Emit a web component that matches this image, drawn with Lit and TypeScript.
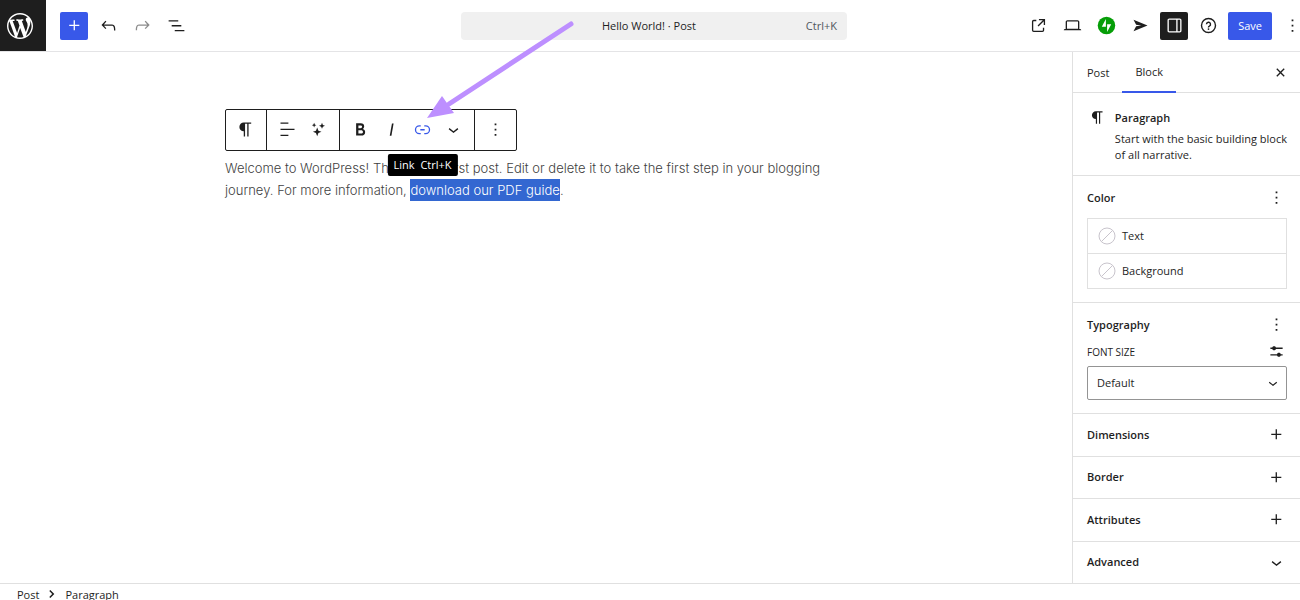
import { LitElement, html, css, svg } from "lit";
import { customElement, property } from "lit/decorators.js";

const ICONS: Record<string, string> = {
  plus: "M11 12.5V17.5H12.5V12.5H17.5V11H12.5V6H11V11H6V12.5H11Z",
  undo: "M18.3 11.7c-.6-.6-1.4-.9-2.3-.9H6.7l2.9-3.3-1.1-1-4.5 5L8.5 16l1-1-2.7-2.7H16c.5 0 .9.2 1.3.5 1 1 1 3.4 1 4.5v.3h1.5v-.2c0-1.5 0-4.3-1.5-5.7z",
  redo: "M15.6 6.5l-1.1 1 2.9 3.3H8c-.9 0-1.7.3-2.3.9-1.4 1.5-1.4 4.2-1.4 5.6v.2h1.5v-.3c0-1.1 0-3.5 1-4.5.3-.3.7-.5 1.3-.5h9.2L14.5 15l1.1 1.1 4.6-4.6-4.6-5z",
  list: "M3 6h11v1.5H3V6Zm3.5 5.5h11V13h-11v-1.5ZM21 17H10v1.5h11V17Z",
  external: "M19.5 4.5h-7V6h4.44l-5.97 5.97 1.06 1.06L18 7.06v4.44h1.5v-7Zm-13 1a2 2 0 0 0-2 2v10a2 2 0 0 0 2 2h10a2 2 0 0 0 2-2v-3H17v3a.5.5 0 0 1-.5.5h-10a.5.5 0 0 1-.5-.5v-10a.5.5 0 0 1 .5-.5h3V5.5h-3Z",
  desktop: "M20.5 16h-.7V8c0-1.1-.9-2-2-2H6.2c-1.1 0-2 .9-2 2v8h-.7c-.8 0-1.5.7-1.5 1.5h20c0-.8-.7-1.5-1.5-1.5zM5.7 8c0-.3.2-.5.5-.5h11.6c.3 0 .5.2.5.5v7.6H5.7V8z",
  send: "M4 5.5L20 12 4 18.5l3-5.6 6-.9-6-.9z",
  drawer: "M18 4H6c-1.1 0-2 .9-2 2v12c0 1.1.9 2 2 2h12c1.1 0 2-.9 2-2V6c0-1.1-.9-2-2-2zm-4 14.5H6c-.3 0-.5-.2-.5-.5V6c0-.3.2-.5.5-.5h8v13zm4.5-.5c0 .3-.2.5-.5.5h-2.5v-13H18c.3 0 .5.2.5.5v12z",
  more: "M13 19h-2v-2h2v2zm0-6h-2v-2h2v2zm0-6h-2V5h2v2z",
  close: "M12 13.06l3.712 3.713 1.061-1.06L13.061 12l3.712-3.712-1.06-1.06L12 10.938 8.288 7.227l-1.061 1.06L10.939 12l-3.712 3.712 1.06 1.061L12 13.061z",
  paragraph: "m9.99609 14v-.2251l.00391.0001v6.225h1.5v-14.5h2.5v14.5h1.5v-14.5h3v-1.5h-8.50391c-2.76142 0-5 2.23858-5 5 0 2.7614 2.23858 5 5 5z",
  align: "M13 5.5H4V4h9v1.5Zm7 7H4V11h16v1.5Zm-7 7H4V18h9v1.5Z",
  sparkles: "M10.5 9.8l1.4 3.5 3.5 1.4-3.5 1.4-1.4 3.5-1.4-3.5-3.5-1.4 3.5-1.4zM16 4.4l1 2.4 2.4 1-2.4 1-1 2.4-1-2.4-2.4-1 2.4-1zM7 4.4l.8 1.8 1.8.8-1.8.8L7 9.6l-.8-1.8L4.4 7l1.8-.8z",
  bold: "M14.7 11.3c1-.6 1.5-1.6 1.5-3 0-2.3-1.3-3.4-4-3.4H7v14h5.8c1.4 0 2.5-.3 3.3-1 .8-.7 1.2-1.7 1.2-2.9.1-1.9-.8-3.1-2.6-3.7zm-5.1-4h2.3c.6 0 1.1.1 1.4.4.3.3.5.7.5 1.2s-.2 1-.5 1.2c-.3.3-.8.4-1.4.4H9.6V7.3zm4.6 9c-.4.3-1 .4-1.7.4H9.6v-3.9h2.9c.7 0 1.3.2 1.7.5.4.3.6.8.6 1.5s-.2 1.2-.6 1.5z",
  italic: "M12.5 5L10 19h1.9l2.5-14z",
  link: "M10 17.389H8.444A5.194 5.194 0 1 1 8.444 7H10v1.5H8.444a3.694 3.694 0 0 0 0 7.389H10v1.5ZM14 7h1.556a5.194 5.194 0 0 1 0 10.39H14v-1.5h1.556a3.694 3.694 0 0 0 0-7.39H14V7Zm-4.5 6h5v-1.5h-5V13Z",
  chevron: "M17.5 11.6L12 16l-5.5-4.4.9-1.2L12 14l4.5-3.6 1 1.2z",
  settings: "M19 7.5h-7.628c-.309-.874-1.142-1.5-2.122-1.5s-1.813.626-2.122 1.5H5V9h2.128c.309.874 1.142 1.5 2.122 1.5s1.813-.626 2.122-1.5H19zM19 15h-2.128c-.309-.874-1.142-1.5-2.122-1.5s-1.813.626-2.122 1.5H5v1.5h7.628c.309.874 1.142 1.5 2.122 1.5s1.813-.626 2.122-1.5H19z",
  crumb: "M9.5 6l6 6-6 6-1.600-1.600 4.400-4.400-4.400-4.400z",
  wordpress: "M20 10c0-5.51-4.49-10-10-10C4.48 0 0 4.49 0 10c0 5.52 4.48 10 10 10 5.51 0 10-4.48 10-10zM7.78 15.37L4.37 6.22c.55-.02 1.17-.08 1.17-.08.5-.06.44-1.13-.06-1.11 0 0-1.45.11-2.37.11-.18 0-.37 0-.58-.01C4.12 2.69 6.87 1.11 10 1.11c2.33 0 4.45.87 6.05 2.34-.68-.11-1.65.39-1.65 1.58 0 .74.45 1.36.9 2.1.35.61.55 1.36.55 2.46 0 1.49-1.4 5-1.4 5l-3.03-8.37c.54-.02.82-.17.82-.17.5-.05.44-1.25-.06-1.22 0 0-1.44.12-2.38.12-.87 0-2.33-.12-2.33-.12-.5-.03-.56 1.2-.06 1.22l.92.08 1.26 3.41zM17.41 10c.24-.64.74-1.87.43-4.25.7 1.29 1.05 2.71 1.05 4.25 0 3.29-1.73 6.24-4.4 7.78.97-2.59 1.94-5.2 2.92-7.78zM6.1 18.09C3.12 16.65 1.11 13.53 1.11 10c0-1.3.23-2.48.72-3.59C3.25 10.3 4.67 14.2 6.1 18.09zm4.03-6.63l2.58 6.98c-.86.29-1.76.45-2.71.45-.79 0-1.57-.11-2.29-.33.81-2.38 1.62-4.74 2.42-7.1z",
};

@customElement("ui-icon")
class UiIcon extends LitElement {
  @property() name = "plus";

  static styles = css`
    :host { display: block; width: 21px; height: 21px; }
    .icon { display: block; width: 100%; height: 100%; fill: currentColor; }
  `;

  render() {
    if (this.name === "help") {
      return html`<svg class="icon" viewBox="0 0 24 24" aria-hidden="true">${svg`
        <circle cx="12" cy="12" r="8" fill="none" stroke="currentColor" stroke-width="1.6"/>
        <path d="M9.7 10.6a2.3 2.3 0 1 1 3.3 2c-.7.3-1 .7-1 1.4v.3" fill="none" stroke="currentColor" stroke-width="1.6"/>
        <circle cx="12" cy="16" r="1"/>`}</svg>`;
    }
    if (this.name === "jetpack") {
      return html`<svg class="icon" viewBox="0 0 24 24" aria-hidden="true">
        <circle cx="12" cy="12" r="10" fill="#069e08"/>
        <path d="M11.3 4.5v9H6.6zM12.7 19.5v-9h4.7z" fill="#fff"/></svg>`;
    }
    const box = this.name === "wordpress" ? "0 0 20 20" : "0 0 24 24";
    return html`<svg class="icon" viewBox=${box} aria-hidden="true"><path fill-rule="evenodd" d=${ICONS[this.name]}></path></svg>`;
  }
}

@customElement("app-root")
class AppRoot extends LitElement {
  static styles = css`
    :host {
      display: flex;
      flex-direction: column;
      height: 100vh;
      overflow: hidden;
      background: #fff;
      color: #1e1e1e;
      font: 11px/16px "Open Sans", "Noto Sans", sans-serif;
    }
    * { box-sizing: border-box; }
    button, select {
      margin: 0;
      padding: 0;
      border: 0;
      background: none;
      color: inherit;
      font: inherit;
    }
    button { display: flex; align-items: center; justify-content: center; }
    h2, p { margin: 0; font-size: inherit; font-weight: 600; }

    .header {
      flex: none;
      display: grid;
      grid-template-columns: 1fr minmax(0, 386px) 1fr;
      column-gap: 4px;
      align-items: center;
      height: 52px;
      border-bottom: 1px solid #e4e4e6;
    }
    .tools { display: flex; align-items: center; gap: 6px; }
    .tools.end { justify-content: flex-end; }
    .home {
      display: flex;
      align-items: center;
      justify-content: center;
      width: 46px;
      height: 51px;
      margin-right: 8px;
      padding-right: 6px;
      background: #1e1e1e;
      color: #fff;
    }
    .home ui-icon { width: 26px; height: 26px; }
    .square { width: 28px; height: 28px; border-radius: 2px; }
    .primary { background: #3858e9; color: #fff; }
    .dark { background: #1e1e1e; color: #fff; }
    .faded { color: #8c8c8c; }
    .save { height: 28px; padding: 0 10px; border-radius: 2px; }
    .last { margin-right: -6px; }
    .command {
      display: grid;
      grid-template-columns: 1fr auto 1fr;
      height: 28px;
      margin-left: 4px;
      margin-right: -4px;
      padding: 0 10px 0 0;
      border-radius: 4px;
      background: #f0f0f0;
    }
    .command .keys { justify-self: end; grid-column: 3; color: #50575e; }
    .command .title { grid-column: 2; }

    .body { flex: 1; min-height: 0; display: flex; }
    .canvas { flex: 1; min-width: 0; padding: 57px 24px 0; }
    .column { max-width: 622px; margin: 0 auto; }
    .toolbar {
      display: flex;
      width: max-content;
      height: 42px;
      margin-bottom: 6px;
      border: 1px solid #1e1e1e;
      border-radius: 2px;
    }
    .group { display: flex; padding: 0 5px 1px; }
    .group:first-child { padding-left: 4px; }
    .group + .group { border-left: 1px solid #1e1e1e; }
    .group button { width: 31px; }
    .anchor { position: relative; display: flex; }
    .active { color: #3858e9; }
    .tip {
      position: absolute;
      top: 44px;
      left: 50%;
      z-index: 1;
      display: flex;
      gap: 6px;
      padding: 3px 6px;
      border-radius: 2px;
      background: #000;
      color: #fff;
      white-space: nowrap;
      transform: translateX(-50%);
    }
    .arrow {
      position: absolute;
      z-index: 2;
      left: 18px;
      bottom: 30px;
      width: 152px;
      height: 100px;
      overflow: visible;
      pointer-events: none;
    }
    .text {
      color: #3f3f3f;
      font: 300 13px/22px Inter, sans-serif;
    }
    .text mark { padding: 3px 0; background: #3367d1; color: #fff; }

    .sidebar {
      flex: none;
      display: flex;
      flex-direction: column;
      width: 228px;
      border-left: 1px solid #e0e0e0;
    }
    .tabs {
      display: flex;
      height: 41px;
      padding-left: 1px;
      border-bottom: 1px solid #e0e0e0;
    }
    .tab { padding: 0 13px; height: 41px; }
    .tab.on { border-bottom: 2px solid #3858e9; }
    .tabs .close { width: 28px; margin: 0 6px 0 auto; }
    .panel { padding: 11px 13px 13px 14px; border-bottom: 1px solid #e0e0e0; }
    .card { display: flex; gap: 8px; padding: 16px 13px 12px 15px; }
    .card ui-icon { margin-top: -2px; }
    .card div { flex: 1; }
    .card h2 { margin-bottom: 4px; line-height: 18px; }
    .card p { font-weight: 400; white-space: nowrap; }
    .bar { display: flex; align-items: center; justify-content: space-between; }
    .bar + .bar { margin-top: 6px; }
    .swatches { margin-top: 10px; border: 1px solid #e0e0e0; }
    .swatch {
      justify-content: flex-start;
      gap: 6px;
      width: 100%;
      height: 34px;
      padding-left: 10px;
    }
    .swatch + .swatch { height: 35px; border-top: 1px solid #e0e0e0; }
    .dot { width: 18px; height: 18px; fill: none; stroke: #c8c4cc; }
    .label { font-size: 10px; font-weight: 500; text-transform: uppercase; }
    .picker { display: grid; margin-top: 4px; align-items: center; }
    .picker select {
      grid-area: 1 / 1;
      width: 100%;
      height: 34px;
      padding: 0 9px;
      border: 1px solid #949494;
      border-radius: 2px;
      appearance: none;
    }
    .picker ui-icon {
      grid-area: 1 / 1;
      justify-self: end;
      width: 18px;
      height: 18px;
      margin-right: 5px;
      pointer-events: none;
    }
    .row {
      flex: 1;
      justify-content: space-between;
      width: 100%;
      padding: 0 13px 0 14px;
      border-bottom: 1px solid #e0e0e0;
      font-weight: 600;
    }
    .row:last-child { border-bottom: 0; }

    .footer {
      flex: none;
      display: flex;
      align-items: flex-start;
      gap: 5px;
      height: 17px;
      padding-left: 17px;
      border-top: 1px solid #e0e0e0;
      overflow: hidden;
      line-height: 22px;
    }
    .footer ui-icon { width: 16px; height: 20px; }
  `;

  private tool(icon: string, label: string, extra = "") {
    return html`<button class="square ${extra}" aria-label=${label}><ui-icon name=${icon}></ui-icon></button>`;
  }

  private swatch(label: string) {
    return html`<button class="swatch">
      <svg class="dot" viewBox="0 0 18 18" aria-hidden="true"><circle cx="9" cy="9" r="8"/><path d="M3.5 14.5l11-11"/></svg>
      ${label}
    </button>`;
  }

  private row(label: string, icon: string) {
    return html`<button class="row">${label}<ui-icon name=${icon}></ui-icon></button>`;
  }

  render() {
    return html`
      <header class="header">
        <div class="tools">
          <a class="home" href="#" aria-label="View posts"><ui-icon name="wordpress"></ui-icon></a>
          ${this.tool("plus", "Block inserter", "primary")}
          ${this.tool("undo", "Undo")}
          ${this.tool("redo", "Redo", "faded")}
          ${this.tool("list", "Document overview")}
        </div>
        <button class="command">
          <span class="title">Hello World! · Post</span>
          <span class="keys">Ctrl+K</span>
        </button>
        <div class="tools end">
          ${this.tool("external", "View post")}
          ${this.tool("desktop", "Preview")}
          ${this.tool("jetpack", "Jetpack")}
          ${this.tool("send", "Newsletter")}
          ${this.tool("drawer", "Settings", "dark")}
          ${this.tool("help", "Help")}
          <button class="save primary">Save</button>
          ${this.tool("more", "Options", "last")}
        </div>
      </header>

      <div class="body">
        <main class="canvas">
          <div class="column">
            <div class="toolbar" role="toolbar" aria-label="Block tools">
              <div class="group"><button aria-label="Paragraph"><ui-icon name="paragraph"></ui-icon></button></div>
              <div class="group">
                <button aria-label="Align text"><ui-icon name="align"></ui-icon></button>
                <button aria-label="AI assistant"><ui-icon name="sparkles"></ui-icon></button>
              </div>
              <div class="group">
                <button aria-label="Bold"><ui-icon name="bold"></ui-icon></button>
                <button aria-label="Italic"><ui-icon name="italic"></ui-icon></button>
                <span class="anchor">
                  <button class="active" aria-label="Link"><ui-icon name="link"></ui-icon></button>
                  <span class="tip" role="tooltip"><span>Link</span><span>Ctrl+K</span></span>
                  <svg class="arrow" viewBox="0 0 152 100" aria-hidden="true">
                    <path d="M24 85L146 5" stroke="#bd8fff" stroke-width="5" stroke-linecap="round"/>
                    <path d="M2 99L17 77l12 17z" fill="#bd8fff"/>
                  </svg>
                </span>
                <button aria-label="More formatting"><ui-icon name="chevron"></ui-icon></button>
              </div>
              <div class="group"><button aria-label="Options"><ui-icon name="more"></ui-icon></button></div>
            </div>
            <p class="text">Welcome to WordPress! This is your first post. Edit or delete it to take the first step in your blogging journey. For more information, <mark>download our PDF guide</mark>.</p>
          </div>
        </main>

        <aside class="sidebar">
          <div class="tabs" role="tablist">
            <button class="tab" role="tab">Post</button>
            <button class="tab on" role="tab" aria-selected="true">Block</button>
            <button class="close" aria-label="Close settings"><ui-icon name="close"></ui-icon></button>
          </div>
          <section class="panel card">
            <ui-icon name="paragraph"></ui-icon>
            <div>
              <h2>Paragraph</h2>
              <p>Start with the basic building block<br>of all narrative.</p>
            </div>
          </section>
          <section class="panel">
            <div class="bar"><h2>Color</h2><button aria-label="Color options"><ui-icon name="more"></ui-icon></button></div>
            <div class="swatches">${this.swatch("Text")}${this.swatch("Background")}</div>
          </section>
          <section class="panel">
            <div class="bar"><h2>Typography</h2><button aria-label="Typography options"><ui-icon name="more"></ui-icon></button></div>
            <div class="bar">
              <label class="label" for="size">Font size</label>
              <button aria-label="Set custom size"><ui-icon name="settings"></ui-icon></button>
            </div>
            <div class="picker">
              <select id="size"><option>Default</option></select>
              <ui-icon name="chevron"></ui-icon>
            </div>
          </section>
          ${this.row("Dimensions", "plus")}
          ${this.row("Border", "plus")}
          ${this.row("Attributes", "plus")}
          ${this.row("Advanced", "chevron")}
        </aside>
      </div>

      <footer class="footer">
        <span>Post</span><ui-icon name="crumb"></ui-icon><span>Paragraph</span>
      </footer>
    `;
  }
}
